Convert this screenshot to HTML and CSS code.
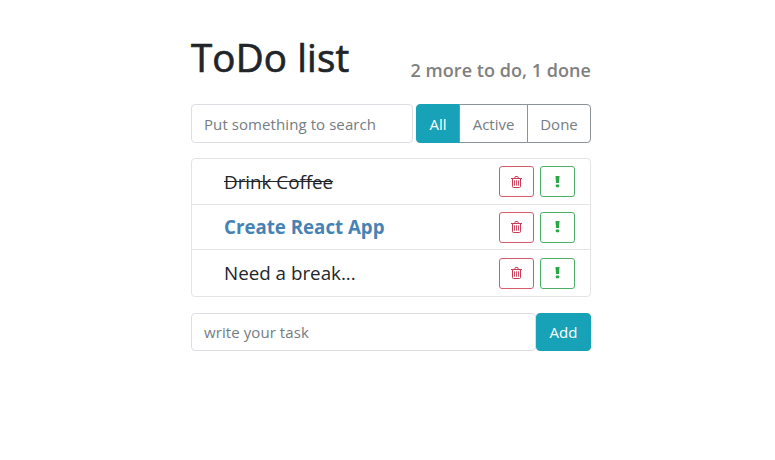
FILE: index.html
```html
<!DOCTYPE html>
<html lang="en">
<head>
<meta charset="utf-8">
<title>ToDo list</title>
<link rel="stylesheet" href="styles.css">
</head>
<body>
<svg class="defs" width="0" height="0" aria-hidden="true">
<symbol id="trash" viewBox="0 0 11 12"><path d="M0 2.5h11M3.5 2.5l.8-2h2.4l.8 2M1.5 2.5v8q0 1 1 1h6q1 0 1-1v-8" fill="none" stroke="currentColor" stroke-width="1"/><path d="M3.5 4.3v5.4M5.5 4.3v5.4M7.5 4.3v5.4" fill="none" stroke="currentColor" stroke-width=".9"/></symbol>
<symbol id="mark" viewBox="0 0 5 12"><path d="M.5 0h4l-.5 7H1z" fill="currentColor"/><rect x=".8" y="8.5" width="3.4" height="2.8" rx=".7" fill="currentColor"/></symbol>
</svg>
<main class="app">
<header class="header"><h1>ToDo list</h1><h2>2 more to do, 1 done</h2></header>
<div class="search-row"><input class="input search" placeholder="Put something to search">
<div class="filters"><button class="on">All</button><button>Active</button><button>Done</button></div></div>
<ul class="list">
<li><span class="label"><span class="done">Drink Coffee</span></span><button class="icon red"><svg class="trash"><use href="#trash"/></svg></button><button class="icon green"><svg class="mark"><use href="#mark"/></svg></button></li>
<li><span class="label important">Create React App</span><button class="icon red"><svg class="trash"><use href="#trash"/></svg></button><button class="icon green"><svg class="mark"><use href="#mark"/></svg></button></li>
<li><span class="label need">Need a break...</span><button class="icon red"><svg class="trash"><use href="#trash"/></svg></button><button class="icon green"><svg class="mark"><use href="#mark"/></svg></button></li>
</ul>
<form class="add-row"><input class="input" placeholder="write your task"><button class="add" type="button">Add</button></form>
</main>
</body>
</html>
```
FILE: styles.css
```css
*{box-sizing:border-box}
body{margin:0;background:#fff;color:#212529;font:16px/24px "Segoe UI","Open Sans","Noto Sans",sans-serif}
.defs{position:absolute}
.app{width:400px;margin:33px 0 0 191px}
.header{display:flex;justify-content:space-between;align-items:flex-end;height:49px}
h1,h2{margin:0;white-space:nowrap}
h1{font-size:38.5px;line-height:50px;font-weight:500;letter-spacing:.15px;-webkit-text-stroke:.7px #212529}
h2{font-size:18px;line-height:24px;font-weight:600;color:#808080;letter-spacing:.05px}
.search-row{display:flex;gap:3px;margin-top:22px;height:39px}
.input{flex:1;min-width:0;border:1px solid #dbdfe3;border-radius:4px;padding:0 12px;font:inherit;font-size:15px;letter-spacing:.08px;color:#495057;background:#fff}
.input::placeholder{color:#747c84;opacity:1}
.search{flex:0 0 222px}
button{font:inherit;font-size:15px;padding:0}
.filters{display:flex;flex:1}
.filters button{border:1px solid #8b9298;color:#747c84;background:#fff;margin-left:-1px;width:69px}
.filters .on{width:44px;margin-left:0;background:#17a2b8;border-color:#17a2b8;color:#fff;border-radius:4px 0 0 4px}
.filters button:last-child{border-radius:0 4px 4px 0;width:64px}
.list{list-style:none;margin:15px 0 16px;padding:0;border:1px solid #e4e4e4;border-radius:4px}
.list li{display:flex;align-items:center;height:45px;padding:0 15px 0 32px}
.list li+li{border-top:1px solid #e4e4e4}
.list li:last-child{height:47px}
.label{flex:1;font-size:18.8px;white-space:nowrap}
.done{text-decoration:line-through}
.important{font-size:18.7px;color:#4682b4;font-weight:700}
.icon{width:35px;height:31px;background:#fff;border:1px solid;border-radius:3px;display:flex;align-items:center;justify-content:center}
.icon+.icon{margin-left:6px}
.red{color:#c73b55;border-color:#d65b6b}.green{color:#28a745;border-color:#4caf66}
.trash{width:11px;height:12px}.mark{width:5px;height:12px}
.add-row{display:flex;height:38px;margin:0}
.add{width:55px;background:#17a2b8;border:1px solid #17a2b8;border-radius:4px;color:#fff}
```
